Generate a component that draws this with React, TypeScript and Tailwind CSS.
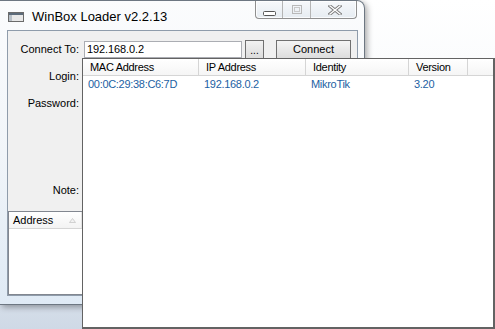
import React from "react";

const font = { fontFamily: '"Liberation Sans", Arial, sans-serif' };

function TitleIcon() {
  return (
    <svg width="16" height="10" viewBox="0 0 16 10" className="shrink-0">
      <rect x="0.5" y="0.5" width="15" height="9" fill="#e8e8e8" stroke="#6b6b6b" />
      <rect x="1" y="1" width="14" height="2" fill="#5c6b7a" />
      <rect x="1" y="3" width="3" height="6" fill="#b8c0c8" />
    </svg>
  );
}

function CaptionButtons() {
  return (
    <div className="flex h-[18px] rounded-b-[4px] border border-t-0 border-[#8f8f8f] bg-gradient-to-b from-[#f7f9fb] to-[#e6ecf2] shadow-[inset_0_0_0_1px_rgba(255,255,255,0.8)]">
      <div className="flex w-[27px] items-center justify-center border-r border-[#b5b5b5]">
        <svg width="13" height="5" viewBox="0 0 13 5" className="mt-[7px]">
          <rect x="0.5" y="0.5" width="12" height="4" rx="1" fill="#fff" stroke="#555" />
        </svg>
      </div>
      <div className="flex w-[28px] items-center justify-center border-r border-[#b5b5b5]">
        <svg width="10" height="9" viewBox="0 0 10 9">
          <rect x="0.5" y="0.5" width="9" height="8" fill="none" stroke="#b9b9b9" />
          <rect x="2.5" y="2.5" width="5" height="4" fill="none" stroke="#c9c9c9" />
        </svg>
      </div>
      <div className="flex w-[45px] items-center justify-center">
        <svg width="14" height="10" viewBox="0 0 14 10" className="ml-[3px]">
          <path d="M2 1 L12 9 M12 1 L2 9" stroke="#7a7a7a" strokeWidth="3.2" strokeLinecap="square" />
          <path d="M2 1 L12 9 M12 1 L2 9" stroke="#ffffff" strokeWidth="1.4" strokeLinecap="square" />
        </svg>
      </div>
    </div>
  );
}

function Label({ children, className = "" }: { children: React.ReactNode; className?: string }) {
  return (
    <div className={"w-[71px] shrink-0 text-right text-[11px] tracking-[0px] text-black " + className}>
      {children}
    </div>
  );
}

function Window() {
  return (
    <div className="absolute left-0 top-0 flex h-[305px] w-[365px] flex-col rounded-tr-[8px] border-r border-b border-t border-[#6d7782] bg-gradient-to-b from-[#fbfcfd] via-[#f1f5f9] to-[#dfeaf5] pl-[7px] pr-[6px] pb-[8px] shadow-[2px_2px_6px_rgba(0,0,0,0.35)]">
      {/* title bar */}
      <div className="flex h-[29px] items-start">
        <div className="flex items-center gap-[8px] pl-[1px] pt-[9px]">
          <TitleIcon />
          <span className="text-[13px] leading-[13px] tracking-[0px] text-black">WinBox Loader v2.2.13</span>
        </div>
        <div className="ml-auto mr-[1px]">
          <CaptionButtons />
        </div>
      </div>
      {/* client area */}
      <div className="flex flex-1 flex-col border border-[#8f9cab] bg-[#f0f0f0]">
        <div className="flex flex-col pt-[9px]">
          <div className="flex h-[19px] items-center">
            <Label>Connect To:</Label>
            <div className="ml-[5px] flex h-[17px] w-[158px] items-center border border-[#abadb3] bg-white pl-[2px] text-[11px] tracking-[-0.1px] text-black">
              192.168.0.2
            </div>
            <div className="ml-[3px] flex h-[19px] w-[19px] items-center justify-center border border-[#707070] bg-gradient-to-b from-[#f2f2f2] to-[#dcdcdc] text-[10px] leading-none text-black">
              <span className="mt-[2px]">...</span>
            </div>
            <div className="ml-[12px] flex h-[19px] w-[75px] items-center justify-center border border-[#707070] bg-gradient-to-b from-[#f4f4f4] to-[#dddddd] text-[11px] text-black">
              Connect
            </div>
          </div>
          <div className="mt-[10px] flex h-[14px] items-center">
            <Label>Login:</Label>
          </div>
          <div className="mt-[13px] flex h-[14px] items-center">
            <Label>Password:</Label>
          </div>
          <div className="mt-[73px] flex h-[14px] items-center">
            <Label>Note:</Label>
          </div>
        </div>
        {/* address list */}
        <div className="mt-[14px] flex flex-1 flex-col border border-[#828790] bg-white">
          <div className="flex h-[17px] items-center border-b border-[#d5d5d5] bg-gradient-to-b from-white to-[#f3f3f3]">
            <span className="pl-[4px] text-[11px] text-black">Address</span>
            <svg width="7" height="5" viewBox="0 0 7 5" className="ml-[16px]">
              <path d="M3.5 0.5 L6.5 4.5 L0.5 4.5 Z" fill="#f2f2f2" stroke="#c8c8c8" strokeWidth="0.8" />
            </svg>
            <div className="ml-[5px] h-full w-px bg-[#e3e3e3]" />
          </div>
        </div>
      </div>
    </div>
  );
}

const cols = [
  { name: "MAC Address", w: "w-[116px]", value: "00:0C:29:38:C6:7D" },
  { name: "IP Address", w: "w-[107px]", value: "192.168.0.2" },
  { name: "Identity", w: "w-[103px]", value: "MikroTik" },
  { name: "Version", w: "w-[59px]", value: "3.20" },
];

function Popup() {
  return (
    <div className="absolute left-[82px] top-[58px] flex h-[271px] w-[413px] flex-col border-l border-t border-r-2 border-b-2 border-[#636363] bg-white">
      <div className="flex h-[17px] border-b border-[#d5d5d5] bg-gradient-to-b from-white to-[#f5f5f5]">
        {cols.map((c) => (
          <div key={c.name} className={"flex items-center border-r border-[#d5d5d5] pl-[7px] text-[11px] tracking-[-0.3px] text-black " + c.w}>
            {c.name}
          </div>
        ))}
        <div className="flex-1" />
      </div>
      <div className="flex h-[17px] items-center">
        {cols.map((c) => (
          <div key={c.name} className={"pl-[5px] text-[11px] tracking-[-0.3px] text-[#1c5fa3] " + c.w}>
            {c.value}
          </div>
        ))}
      </div>
    </div>
  );
}

export default function App() {
  return (
    <div
      style={font}
      className="relative h-[329px] w-[495px] overflow-hidden bg-gradient-to-b from-white via-[#f4f7fa] to-[#cfd9e6]"
    >
      <Window />
      <Popup />
    </div>
  );
}
